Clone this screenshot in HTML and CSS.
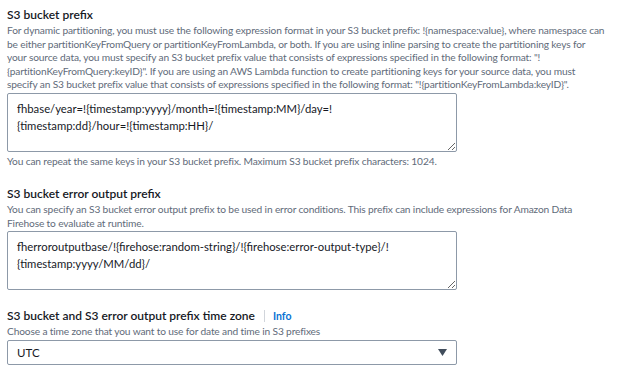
FILE: index.html
```html
<!DOCTYPE html>
<html lang="en">

<head>
    <meta charset="UTF-8">
    <meta name="viewport" content="width=device-width, initial-scale=1.0">
    <title>S3 bucket prefix</title>
    <link rel="stylesheet" href="styles.css">
</head>

<body>
    <div class="form">
        <div class="field">
            <label class="field-label">S3 bucket prefix</label>
            <p class="field-desc">For dynamic partitioning, you must use the following expression format in your S3 bucket prefix: !{namespace:value}, where namespace can<br>
                be either partitionKeyFromQuery or partitionKeyFromLambda, or both. If you are using inline parsing to create the partitioning keys for<br>
                your source data, you must specify an S3 bucket prefix value that consists of expressions specified in the following format: "!<br>
                {partitionKeyFromQuery:keyID}". If you are using an AWS Lambda function to create partitioning keys for your source data, you must<br>
                specify an S3 bucket prefix value that consists of expressions specified in the following format: "!{partitionKeyFromLambda:keyID}".</p>
            <textarea class="field-input" rows="3">fhbase/year=!{timestamp:yyyy}/month=!{timestamp:MM}/day=!
{timestamp:dd}/hour=!{timestamp:HH}/</textarea>
            <p class="field-hint">You can repeat the same keys in your S3 bucket prefix. Maximum S3 bucket prefix characters: 1024.</p>
        </div>

        <div class="field">
            <label class="field-label">S3 bucket error output prefix</label>
            <p class="field-desc">You can specify an S3 bucket error output prefix to be used in error conditions. This prefix can include expressions for Amazon Data<br>
                Firehose to evaluate at runtime.</p>
            <textarea class="field-input" rows="3">fherroroutputbase/!{firehose:random-string}/!{firehose:error-output-type}/!
{timestamp:yyyy/MM/dd}/</textarea>
        </div>

        <div class="field">
            <label class="field-label">S3 bucket and S3 error output prefix time zone <span class="info">Info</span></label>
            <p class="field-desc">Choose a time zone that you want to use for date and time in S3 prefixes</p>
            <div class="select">
                <span>UTC</span>
                <svg width="9" height="7" viewBox="0 0 9 7"><path d="M0 0h9L4.5 7z" fill="#414d5c"/></svg>
            </div>
        </div>
    </div>
</body>

</html>
```

FILE: styles.css
```css
body {
    font-family: Lato, sans-serif;
    background-color: #fff;
    color: #16191f;
    margin: 0;
    padding: 0;
}

.form {
    padding: 6px 7px;
    width: 617px;
}

.field + .field {
    margin-top: 17px;
}

.field-label {
    display: block;
    font-size: 12px;
    font-weight: 600;
    line-height: 18px;
    color: #16191f;
}

.info {
    color: #0972d3;
    font-size: 10.5px;
    font-weight: 700;
    border-left: 1px solid #d1d5db;
    padding-left: 8px;
    margin-left: 6px;
}

.field-desc,
.field-hint {
    margin: 0;
    font-size: 10.2px;
    letter-spacing: -0.15px;
    line-height: 13.5px;
    color: #5f6b7a;
    white-space: nowrap;
}

.field-hint {
    margin-top: 3px;
}

.field-input {
    display: block;
    box-sizing: border-box;
    width: 450px;
    height: 59px;
    margin-top: 1px;
    padding: 6px 9px;
    font-family: Lato, sans-serif;
    font-size: 11.3px;
    line-height: 17px;
    color: #16191f;
    border: 1px solid #8d99a8;
    border-radius: 2px;
    resize: vertical;
}

.select {
    box-sizing: border-box;
    width: 450px;
    height: 25px;
    margin-top: 1px;
    padding: 0 9px;
    display: flex;
    align-items: center;
    justify-content: space-between;
    font-size: 11.5px;
    border: 1px solid #8d99a8;
    border-radius: 2px;
}
```
